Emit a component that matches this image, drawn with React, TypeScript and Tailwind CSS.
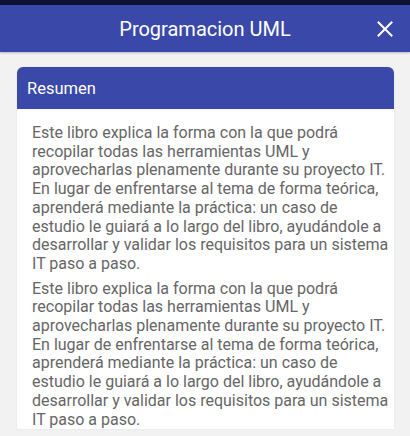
import { FC } from "react";

const lineas = [
  "Este libro explica la forma con la que podrá",
  "recopilar todas las herramientas UML y",
  "aprovecharlas plenamente durante su proyecto IT.",
  "En lugar de enfrentarse al tema de forma teórica,",
  "aprenderá mediante la práctica: un caso de",
  "estudio le guiará a lo largo del libro, ayudándole a",
  "desarrollar y validar los requisitos para un sistema",
  "IT paso a paso.",
];

const CloseIcon: FC = () => (
  <svg width="16" height="16" viewBox="0 0 16 16" fill="none">
    <path d="M1.5 1.5 L14.5 14.5 M14.5 1.5 L1.5 14.5" stroke="white" strokeWidth="2" strokeLinecap="square" />
  </svg>
);

const Parrafo: FC = () => (
  <p className="whitespace-nowrap">
    {lineas.map((l, i) => (
      <span key={i} className="block">
        {l}
      </span>
    ))}
  </p>
);

export default function App() {
  return (
    <div
      className="w-[410px] h-[436px] overflow-hidden bg-[#f2f2f2] flex flex-col"
      style={{ fontFamily: "Roboto, 'Liberation Sans', sans-serif" }}
    >
      <div className="h-[5px] bg-[#0b1233] shrink-0" />
      <header className="relative h-[47px] bg-[#3a48a9] flex items-center justify-center shrink-0 shadow-[0_1px_2px_rgba(0,0,0,0.25)]">
        <h1 className="text-[20px] text-white">Programacion UML</h1>
        <button className="absolute right-[17px] top-[16px]">
          <CloseIcon />
        </button>
      </header>
      <div className="pl-[17px] pr-[16px] pt-[15px]">
        <section className="bg-white rounded-t-[6px] shadow-[0_0_2px_rgba(0,0,0,0.08)]">
          <div className="h-[42px] bg-[#3a48a9] rounded-t-[6px] flex items-center px-[10px] pt-[2px]">
            <h2 className="text-[16.5px] text-white">Resumen</h2>
          </div>
          <div className="pl-[15px] pr-[10px] pt-[15px] flex flex-col gap-[6px] text-[16px] leading-[18.7px] text-[#666666]">
            <Parrafo />
            <Parrafo />
          </div>
        </section>
      </div>
    </div>
  );
}
